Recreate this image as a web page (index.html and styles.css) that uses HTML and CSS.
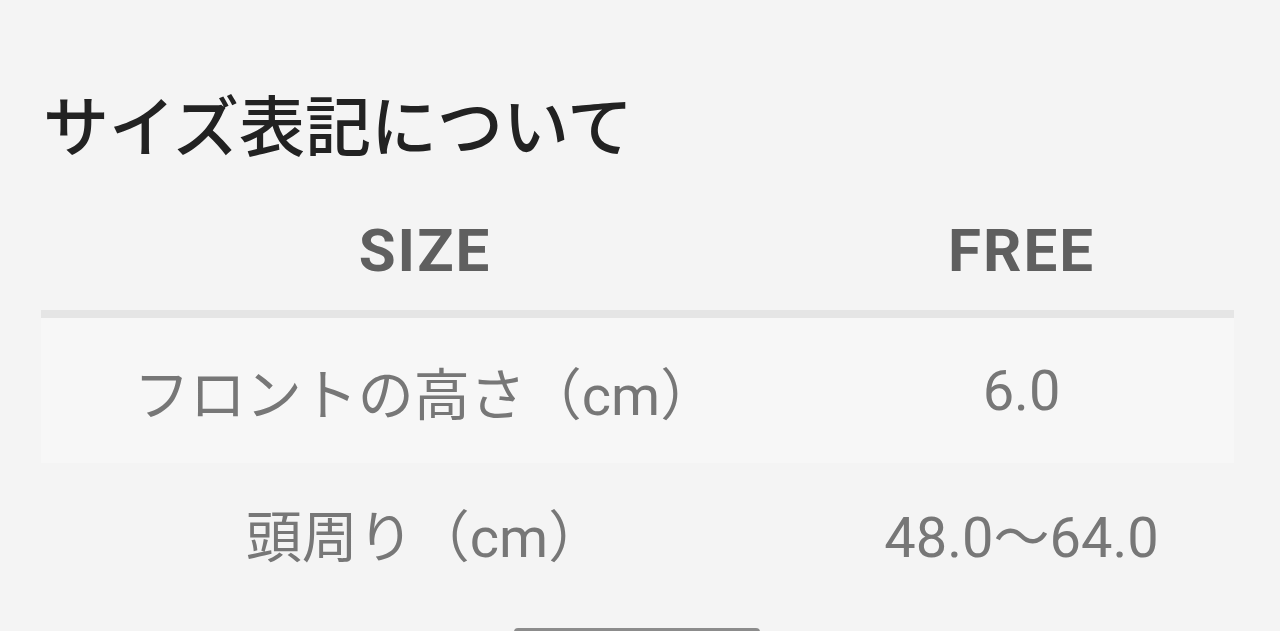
FILE: index.html
```html
<!DOCTYPE html>
<html lang="ja">

<head>
  <meta charset="UTF-8" />
  <title>サイズ表記について</title>
  <meta name="viewport" content="width=device-width, initial-scale=1.0" />
  <link rel="stylesheet" href="styles.css">
</head>

<body>

  <div class="size-guide">
    <h2>サイズ表記について</h2>
    <table class="size-table">
      <thead>
        <tr>
          <th class="col-label">SIZE</th>
          <th class="col-value">FREE</th>
        </tr>
      </thead>
      <tbody>
        <tr class="striped">
          <td>フロントの高さ（cm）</td>
          <td>6.0</td>
        </tr>
        <tr>
          <td>頭周り（cm）</td>
          <td>48.0〜64.0</td>
        </tr>
      </tbody>
    </table>
    <div class="bottom-bar"></div>
  </div>

</body>

</html>
```

FILE: styles.css
```css
* {
  box-sizing: border-box;
}

body {
  margin: 0;
  padding: 0;
  font-family: Roboto, "Noto Sans CJK JP", sans-serif;
  background-color: #f4f4f4;
  color: #222;
  height: 100vh;
  overflow: hidden;
}

.size-guide {
  padding: 77px 46px 0 41px;
}

h2 {
  margin: 0 0 23px;
  font-family: "Noto Sans CJK JP", sans-serif;
  font-size: 66px;
  line-height: 90px;
  font-weight: 500;
  color: #222;
  padding-left: 2px;
}

.size-table {
  width: 100%;
  border-collapse: collapse;
}

.size-table th {
  height: 124px;
  font-size: 60px;
  font-weight: 700;
  letter-spacing: 2px;
  color: #5f5f5f;
  text-align: center;
  border-bottom: 8px solid #e5e5e5;
  padding: 0;
}

.col-label {
  width: 768px;
}

.size-table td {
  height: 138px;
  font-size: 56px;
  color: #777;
  text-align: center;
  padding: 0;
}

.striped td {
  background-color: #f7f7f7;
  height: 149px;
}

.bottom-bar {
  width: 246px;
  height: 4px;
  margin: 27px 0 0 473px;
  background-color: #8c8c8c;
  border-radius: 6px 6px 0 0;
}
```
